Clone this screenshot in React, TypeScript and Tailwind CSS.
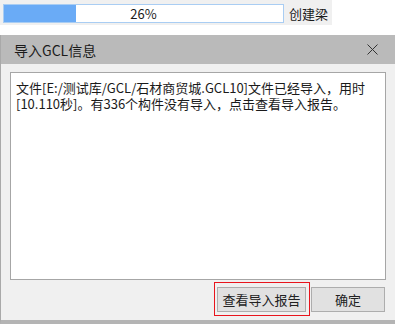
import React from 'react';

const font = { fontFamily: '"Microsoft YaHei", "Noto Sans CJK SC", "Noto Sans", sans-serif' };

const App: React.FC = () => {
  const progress = 26;

  return (
    <div className="w-[399px] h-[324px] bg-white overflow-hidden text-[#1a1a1a]" style={font}>
      {/* progress strip */}
      <div className="w-[332px] h-[25px] bg-[#f0f0f0] flex items-center pl-[3px] pt-[1px]">
        <div className="relative w-[281px] h-[19px] border border-[#a9cdf3] bg-white">
          <div className="absolute left-0 top-0 bottom-0 bg-[#6aabf6]" style={{ width: `${progress * 2.78}px` }} />
          <div className="relative h-full flex items-center justify-center text-[13px] leading-none">{progress}%</div>
        </div>
        <span className="ml-[5px] text-[13px] leading-none">创建梁</span>
      </div>

      {/* dialog */}
      <div className="mt-[10px] w-[395px] h-[289px] flex flex-col border-l border-[#a9a9a9] border-b-[4px] border-b-[#b4b4b4]">
        <div className="h-[29px] bg-[#bababa] flex items-center justify-between pl-[13px] pr-[17px]">
          <span className="text-[14px] leading-none">导入GCL信息</span>
          <svg width="11" height="11" viewBox="0 0 11 11" className="text-[#333]">
            <path d="M0.5 0.5 L10.5 10.5 M10.5 0.5 L0.5 10.5" stroke="currentColor" strokeWidth="1" fill="none" />
          </svg>
        </div>
        <div className="flex-1 bg-[#f0f0f0] pl-[9px] pr-[9px] pt-[8px] flex flex-col">
          <div className="w-[376px] h-[208px] border border-[#a6a6a6] bg-white pl-[5px] pt-[7px] text-[13px] leading-[16px]">
            文件[E:/测试库/GCL/石材商贸城.GCL10]文件已经导入，用时
            <br />
            [10.110秒]。有336个构件没有导入，点击查看导入报告。
          </div>
          <div className="mt-[2px] flex justify-end pr-[1px]">
            <div className="border border-[#e8141c] pt-[3px] pl-[2px] pr-[3px] pb-[3px]">
              <button className="w-[89px] h-[25px] bg-[#e1e1e1] border border-[#adadad] text-[13px] leading-none text-[#222]">
                查看导入报告
              </button>
            </div>
            <div className="pt-[4px] ml-[1px]">
              <button className="w-[74px] h-[25px] bg-[#e1e1e1] border border-[#adadad] text-[13px] leading-none text-[#222]">
                确定
              </button>
            </div>
          </div>
        </div>
      </div>
    </div>
  );
};

export default App;
